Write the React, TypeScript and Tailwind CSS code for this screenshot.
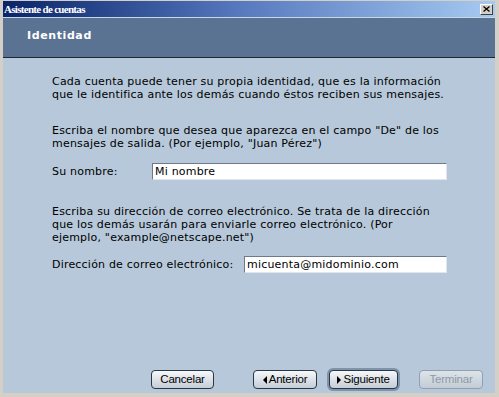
import React from 'react';

function WizardButton({
  label,
  arrow,
  focused,
  disabled,
  width,
}: {
  label: string;
  arrow?: 'left' | 'right';
  focused?: boolean;
  disabled?: boolean;
  width: string;
}) {
  const base = disabled
    ? 'border-[#8fa0b2] text-[#8e9aa6] from-[#dde3e9] to-[#c3ccd5]'
    : 'border-[#2b3744] text-black from-[#f6f8fa] to-[#c4cdd6]';
  return (
    <div className={focused ? 'rounded-[6px] p-[2px] bg-[#7e94ad]' : 'p-[2px]'}>
      <button
        className={`${width} h-[19px] rounded-[4px] border bg-gradient-to-b ${base} flex items-center justify-center gap-[2px] text-[11.5px] tracking-[-0.2px] font-['Liberation_Sans',Arial,sans-serif] leading-none`}
      >
        {arrow === 'left' && (
          <svg width="4" height="8" viewBox="0 0 4 8">
            <path d="M4 0 L0 4 L4 8 Z" fill="#000" />
          </svg>
        )}
        {arrow === 'right' && (
          <svg width="4" height="8" viewBox="0 0 4 8">
            <path d="M0 0 L4 4 L0 8 Z" fill="#000" />
          </svg>
        )}
        <span>{label}</span>
      </button>
    </div>
  );
}

export default function App() {
  return (
    <div className="w-[499px] h-[397px] bg-[#d4d0c8] flex flex-col pt-px pl-[3px] pr-[4px] pb-[4px] overflow-hidden">
      {/* title bar */}
      <div className="h-[16px] shrink-0 bg-gradient-to-r from-[#0a246a] via-[#5a7cc0] to-[#a6caf0] flex items-center justify-between pl-[1px] pr-[2px]">
        <span className="text-white font-bold text-[11px] tracking-[-0.7px] leading-none font-['Liberation_Serif','Times_New_Roman',serif]">
          Asistente de cuentas
        </span>
        <div className="w-[13px] h-[11px] bg-[#d4d0c8] border-t border-l border-white border-b border-r border-b-[#404040] border-r-[#404040] flex items-center justify-center">
          <svg width="7" height="6" viewBox="0 0 7 6">
            <path d="M0.5 0.5 L6.5 5.5 M6.5 0.5 L0.5 5.5" stroke="#000" strokeWidth="1.3" />
          </svg>
        </div>
      </div>

      {/* header */}
      <div className="h-[41px] shrink-0 bg-[#5b7392] border-t border-[#c9d6e3] border-b border-b-[#1d2733] flex items-center pl-[24px] pb-[2px]">
        <span className="text-white font-bold text-[11px] tracking-[0.6px] font-['DejaVu_Sans',Verdana,sans-serif]">
          Identidad
        </span>
      </div>

      {/* body */}
      <div className="flex-1 bg-[#b6c8d9] flex flex-col pl-[49px] pr-[48px] text-[11px] tracking-[0.2px] leading-[13px] text-black font-['DejaVu_Sans',Verdana,sans-serif]">
        <p className="mt-[17px] whitespace-nowrap">
          Cada cuenta puede tener su propia identidad, que es la información
          <br />
          que le identifica ante los demás cuando éstos reciben sus mensajes.
        </p>

        <p className="mt-[23px] whitespace-nowrap">
          Escriba el nombre que desea que aparezca en el campo "De" de los
          <br />
          mensajes de salida. (Por ejemplo, "Juan Pérez")
        </p>

        <div className="mt-[13px] flex items-center">
          <span className="w-[100px]">Su nombre:</span>
          <div className="w-[295px] h-[17px] bg-white border-t border-l border-[#6e7a87] border-b border-r border-b-[#dfe6ed] border-r-[#dfe6ed] flex items-center pl-[2px]">
            Mi nombre
          </div>
        </div>

        <p className="mt-[25px] whitespace-nowrap">
          Escriba su dirección de correo electrónico. Se trata de la dirección
          <br />
          que los demás usarán para enviarle correo electrónico. (Por
          <br />
          ejemplo, "example@netscape.net")
        </p>

        <div className="mt-[12px] flex items-center">
          <span className="w-[192px]">Dirección de correo electrónico:</span>
          <div className="w-[203px] h-[17px] bg-white border-t border-l border-[#6e7a87] border-b border-r border-b-[#dfe6ed] border-r-[#dfe6ed] flex items-center pl-[2px]">
            micuenta@midominio.com
          </div>
        </div>

        <div className="mt-auto mb-[2px] flex items-center -ml-[49px] pl-[146px] gap-[35px]">
          <WizardButton label="Cancelar" width="w-[63px]" />
          <div className="flex items-center gap-[8px]">
            <WizardButton label="Anterior" arrow="left" width="w-[64px]" />
            <WizardButton label="Siguiente" arrow="right" width="w-[69px]" focused />
          </div>
          <div className="-ml-[18px]">
            <WizardButton label="Terminar" width="w-[64px]" disabled />
          </div>
        </div>
      </div>
    </div>
  );
}
